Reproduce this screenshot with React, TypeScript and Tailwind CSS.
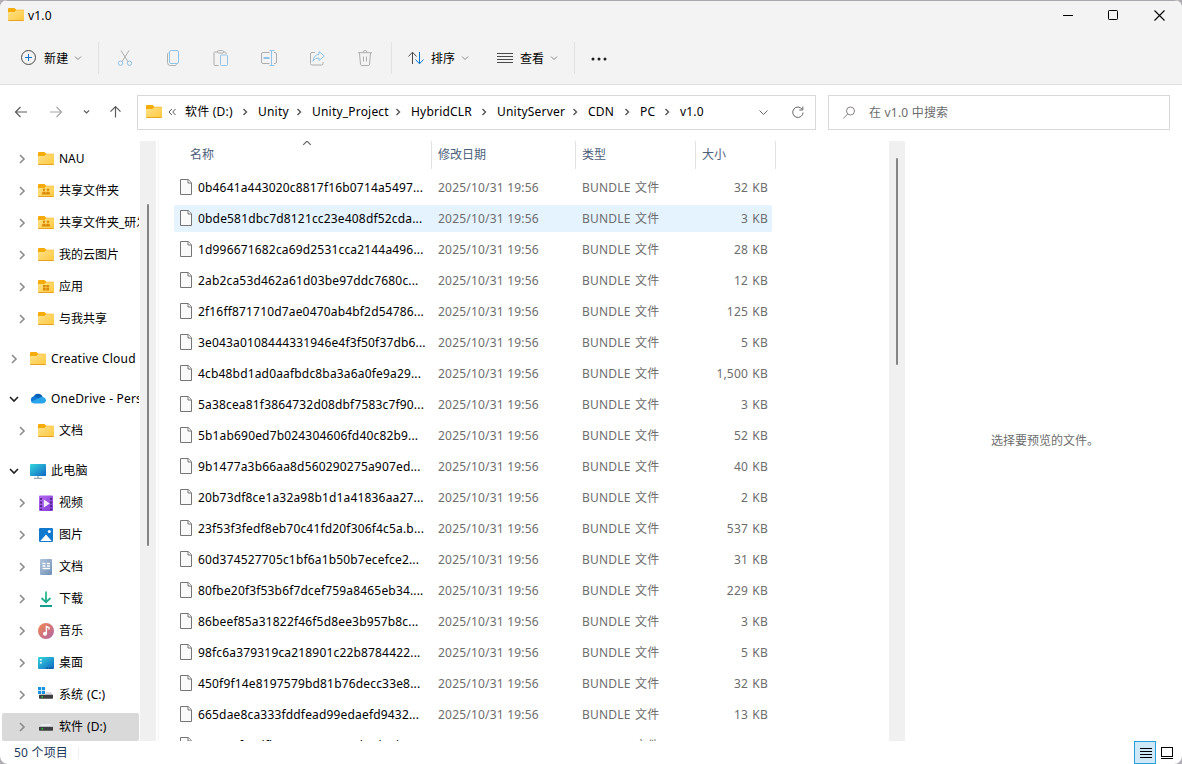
import React from 'react';
import clsx from 'clsx';

type IconName =
  | 'folder'
  | 'shared'
  | 'apps'
  | 'cloud'
  | 'pc'
  | 'video'
  | 'picture'
  | 'document'
  | 'download'
  | 'music'
  | 'desktop'
  | 'system'
  | 'drive';

interface TreeItem {
  label: string;
  icon: IconName;
  root?: boolean;
  open?: boolean;
  selected?: boolean;
}

const treeGroups: TreeItem[][] = [
  [
    { label: 'NAU', icon: 'folder' },
    { label: '共享文件夹', icon: 'shared' },
    { label: '共享文件夹_研发', icon: 'shared' },
    { label: '我的云图片', icon: 'folder' },
    { label: '应用', icon: 'apps' },
    { label: '与我共享', icon: 'folder' },
  ],
  [{ label: 'Creative Cloud Files', icon: 'folder', root: true }],
  [
    { label: 'OneDrive - Personal', icon: 'cloud', root: true, open: true },
    { label: '文档', icon: 'folder' },
  ],
  [
    { label: '此电脑', icon: 'pc', root: true, open: true },
    { label: '视频', icon: 'video' },
    { label: '图片', icon: 'picture' },
    { label: '文档', icon: 'document' },
    { label: '下载', icon: 'download' },
    { label: '音乐', icon: 'music' },
    { label: '桌面', icon: 'desktop' },
    { label: '系统 (C:)', icon: 'system' },
    { label: '软件 (D:)', icon: 'drive', selected: true },
  ],
];

const files = [
  { name: '0b4641a443020c8817f16b0714a5497...', size: '32 KB' },
  { name: '0bde581dbc7d8121cc23e408df52cda...', size: '3 KB', hover: true },
  { name: '1d996671682ca69d2531cca2144a496...', size: '28 KB' },
  { name: '2ab2ca53d462a61d03be97ddc7680c...', size: '12 KB' },
  { name: '2f16ff871710d7ae0470ab4bf2d54786...', size: '125 KB' },
  { name: '3e043a0108444331946e4f3f50f37db6...', size: '5 KB' },
  { name: '4cb48bd1ad0aafbdc8ba3a6a0fe9a29...', size: '1,500 KB' },
  { name: '5a38cea81f3864732d08dbf7583c7f90...', size: '3 KB' },
  { name: '5b1ab690ed7b024304606fd40c82b9...', size: '52 KB' },
  { name: '9b1477a3b66aa8d560290275a907ed...', size: '40 KB' },
  { name: '20b73df8ce1a32a98b1d1a41836aa27...', size: '2 KB' },
  { name: '23f53f3fedf8eb70c41fd20f306f4c5a.b...', size: '537 KB' },
  { name: '60d374527705c1bf6a1b50b7ecefce2...', size: '31 KB' },
  { name: '80fbe20f3f53b6f7dcef759a8465eb34....', size: '229 KB' },
  { name: '86beef85a31822f46f5d8ee3b957b8c...', size: '3 KB' },
  { name: '98fc6a379319ca218901c22b8784422...', size: '5 KB' },
  { name: '450f9f14e8197579bd81b76decc33e8...', size: '32 KB' },
  { name: '665dae8ca333fddfead99edaefd9432...', size: '13 KB' },
  { name: '8a5e2cf94dfb30716e2a95c4b7d30b2e...', size: '9 KB' },
];

const crumbs = [
  { label: '软件 (D:)', width: 'w-[73px]' },
  { label: 'Unity', width: 'w-[54px]' },
  { label: 'Unity_Project', width: 'w-[99px]' },
  { label: 'HybridCLR', width: 'w-[86px]' },
  { label: 'UnityServer', width: 'w-[91px]' },
  { label: 'CDN', width: 'w-[52px]' },
  { label: 'PC', width: 'w-[40px]' },
  { label: 'v1.0', width: 'w-[40px]' },
];

const Gradients: React.FC = () => (
  <svg className="absolute h-0 w-0">
    <defs>
      <linearGradient id="folder" x1="0" y1="0" x2="1" y2="1">
        <stop offset="0" stopColor="#ffe28a" />
        <stop offset="1" stopColor="#ffc83d" />
      </linearGradient>
      <linearGradient id="screen" x1="0" y1="0" x2="1" y2="1">
        <stop offset="0" stopColor="#35d6dc" />
        <stop offset="1" stopColor="#0f68c4" />
      </linearGradient>
      <linearGradient id="violet" x1="0" y1="0" x2="1" y2="1">
        <stop offset="0" stopColor="#b16af0" />
        <stop offset="1" stopColor="#8438d8" />
      </linearGradient>
      <linearGradient id="paper" x1="0" y1="0" x2="1" y2="1">
        <stop offset="0" stopColor="#b3c6dc" />
        <stop offset="1" stopColor="#6f8fb5" />
      </linearGradient>
      <linearGradient id="disc" x1="0" y1="0" x2="1" y2="1">
        <stop offset="0" stopColor="#f2894f" />
        <stop offset="1" stopColor="#b064a8" />
      </linearGradient>
      <linearGradient id="arrow" gradientUnits="userSpaceOnUse" x1="0" y1="0" x2="0" y2="16">
        <stop offset="0" stopColor="#2fc48d" />
        <stop offset="1" stopColor="#129c8c" />
      </linearGradient>
    </defs>
  </svg>
);

const FolderShape: React.FC = () => (
  <>
    <path d="M0 2a1 1 0 0 1 1-1h5.500l1.800 1.800H15a1 1 0 0 1 1 1V7H0z" fill="#f5ac0b" />
    <path d="M0 6a1 1 0 0 1 1-1h5.400L8.200 3.200H15a1 1 0 0 1 1 1V13a1 1 0 0 1-1 1H1a1 1 0 0 1-1-1z" fill="url(#folder)" />
    <path d="M.3 13.500h15.400" stroke="#e9a320" />
  </>
);

const drawings: Record<IconName, React.ReactNode> = {
  folder: <FolderShape />,
  shared: (
    <>
      <FolderShape />
      <g fill="#d98b06">
        <circle cx="6" cy="6.700" r="1.200" />
        <circle cx="10" cy="6.700" r="1.200" />
        <path d="M3.800 11.500c0-4 4-4 4.100-.9.2-3.100 4.300-3.100 4.300.9z" />
      </g>
    </>
  ),
  apps: (
    <>
      <FolderShape />
      <path d="M5 6h2.700v2.500H5zM8.300 6H11v2.500H8.300zM5 9h2.700v2.600H5zM8.300 9H11v2.600H8.300z" fill="#d98b06" />
    </>
  ),
  cloud: (
    <>
      <path d="M3.500 6.500a4.800 4.800 0 0 1 9.100-.9L10 9z" fill="#0a5fb9" />
      <path d="M3.700 12.200a3.500 3.500 0 0 1-.3-6.800c1.500-.4 2.700.1 4 .9L13 12.200z" fill="#0f78d4" />
      <path d="M1 10.800 10.600 6.300c2-.9 5.400.2 5.400 3 0 1.700-1.200 2.900-2.800 2.900H3.700c-1 0-2-.3-2.700-1.400z" fill="#29a5ec" />
    </>
  ),
  pc: (
    <>
      <rect x="0" y="1" width="16" height="12" rx=".8" fill="url(#screen)" />
      <path d="M8 13v2M4 15.300h8" stroke="#9aa7b2" strokeWidth="1.300" />
    </>
  ),
  video: (
    <>
      <rect x="1" y=".5" width="14" height="15.500" rx="1" fill="url(#violet)" />
      <path d="M3 3v12M13 3v12" stroke="#3a1a6b" strokeWidth="1.600" strokeDasharray="1.800 1.800" />
      <path d="M5.800 4.500v8l6-4z" fill="#f3eafd" />
    </>
  ),
  picture: (
    <>
      <rect x="1" y="1" width="14" height="14" rx="1.300" fill="#1179ce" />
      <path d="M2.300 14 8 7.500l5.700 6.500z" fill="#fff" />
      <circle cx="11.300" cy="4.600" r="1.500" fill="#fff" />
    </>
  ),
  document: (
    <>
      <rect x="2" y="0" width="12" height="16" rx="1" fill="url(#paper)" />
      <path d="M4.500 4.500h3M4.500 7h3M8.800 4.500H12M8.800 7H12M4.500 9.500H12" stroke="#fff" strokeWidth="1.300" />
    </>
  ),
  download: <path d="M8 .5V11M3.500 7 8 11.200 12.500 7M2 15h12" fill="none" stroke="url(#arrow)" strokeWidth="1.800" />,
  music: (
    <>
      <circle cx="8" cy="8" r="8" fill="url(#disc)" />
      <path d="M8.400 10.500V3.500l2.600 1.200v1.800" fill="none" stroke="#fff" strokeWidth="1.400" />
      <circle cx="7" cy="10.800" r="2" fill="#fff" />
    </>
  ),
  desktop: (
    <>
      <rect x="0" y="2" width="16" height="12" rx="1" fill="url(#screen)" />
      <path d="M2 4.800h1.700M2 7.800h1.700" stroke="#fff" strokeWidth="1.600" />
      <path d="M8.500 13h6" stroke="#0b3d75" strokeDasharray="1.500 1" />
    </>
  ),
  system: (
    <>
      <path d="M0 0h3.200v3.200H0zM3.900 0h3.200v3.200H3.900zM0 3.900h3.200v3.200H0zM3.900 3.900h3.200v3.200H3.900z" fill="#1a94e0" />
      <path d="M8 5h5l2 3H1l.6-.6H8z" fill="#dcdce0" />
      <rect x="1" y="7.700" width="14" height="4" rx=".7" fill="#3c3f41" />
      <rect x="3.500" y="9.200" width="1.500" height="1.300" fill="#3be03b" />
    </>
  ),
  drive: (
    <>
      <path d="M3.500 5h9L15 8H1z" fill="#ebebee" />
      <rect x="1" y="7.700" width="14" height="4" rx=".7" fill="#3c3f41" />
      <rect x="3.500" y="9.200" width="1.500" height="1.300" fill="#3be03b" />
    </>
  ),
};

const Icon: React.FC<{ name: IconName }> = ({ name }) => (
  <svg viewBox="0 0 16 16" className="h-4 w-4 shrink-0">
    {drawings[name]}
  </svg>
);

const Chevron: React.FC<{ className: string }> = ({ className }) => (
  <svg viewBox="0 0 8 8" fill="none" stroke="currentColor" className={clsx('h-2 w-2 shrink-0', className)}>
    <path d="m1 2.500 3 3 3-3" />
  </svg>
);

const TitleBar: React.FC = () => (
  <div className="flex h-[31px] items-center border-t border-[#aaa8ac] pb-0.5 pl-2">
    <Icon name="folder" />
    <span className="ml-1 grow pt-0.5">v1.0</span>
    <svg viewBox="0 0 120 14" fill="none" stroke="#000" className="mr-4 h-3.5 w-[120px]">
      <path d="M17 7.500h10" />
      <rect x="62.500" y="2.500" width="9" height="9" rx=".8" />
      <path d="m108.500 2.500 10 10m0-10-10 10" strokeWidth="1.100" />
    </svg>
  </div>
);

const actions: React.ReactNode[] = [
  <>
    <path d="M4 .5 11.200 12M12 .5 4.800 12" stroke="#adadad" />
    <circle cx="3.500" cy="13.200" r="2.200" />
    <circle cx="12.500" cy="13.200" r="2.200" />
  </>,
  <>
    <path d="M3.500 2.800C2.500 3.100 2.500 3.800 2.500 5v7.500a3 3 0 0 0 3 3H10c.8 0 1.500-.5 1.800-1.200" stroke="#adadad" />
    <rect x="4.500" y=".5" width="9" height="13" rx="1.500" />
  </>,
  <>
    <path d="M4.500 2H2a1 1 0 0 0-1 1v11.500a1 1 0 0 0 1 1h3.500M10.500 2H12a1 1 0 0 1 1 1v1" stroke="#adadad" />
    <rect x="4.500" y=".6" width="6" height="2.500" rx="1.100" stroke="#adadad" />
    <rect x="7.500" y="5" width="7" height="10.500" rx="1" />
  </>,
  <>
    <path d="M8.500 2.500H2A1.500 1.500 0 0 0 .5 4v8A1.500 1.500 0 0 0 2 13.500h6.500M13 2.500h1.200A1.500 1.500 0 0 1 15.500 4v8a1.500 1.500 0 0 1-1.300 1.500H13" stroke="#adadad" />
    <path d="M8.500.5h5M8.500 15.500h5M10.500 .5v15" />
    <path d="M2.500 8h6" strokeWidth="2" />
  </>,
  <>
    <path d="M6 2.500H3A1.500 1.500 0 0 0 1.500 4v9.500A1.500 1.500 0 0 0 3 15h9.500a1.500 1.500 0 0 0 1.500-1.500V12" stroke="#adadad" />
    <path d="M10 1.500 15.300 6 10 10.500V8c-3 0-4.500.8-6 3.300.3-4.300 2.500-6.600 6-7z" />
  </>,
  <>
    <path d="M1 2.700h14M6 2.500a2 2 0 0 1 4 0M2.500 3l1 11.300c0 .7.500 1.200 1.200 1.200h6.600c.7 0 1.200-.5 1.200-1.200l1-11.300M6.500 6.500v5M9.500 6.500v5" stroke="#adadad" />
  </>,
];

const Divider: React.FC = () => <div className="h-8 w-px shrink-0 bg-[#e2e2e2]" />;

const Toolbar: React.FC = () => (
  <div className="flex h-[54px] items-center border-b border-[#dedede] pt-px">
    <div className="flex w-[98px] items-center pl-5">
      <svg viewBox="0 0 16 16" fill="none" className="mr-2 h-4 w-4">
        <circle cx="8.500" cy="7.500" r="7" stroke="#4a4a4a" />
        <path d="M8.500 4v7M5 7.500h7" stroke="#0a74cc" />
      </svg>
      <span className="pt-0.5">新建</span>
      <Chevron className="ml-1.5 text-[#8a8a8a]" />
    </div>
    <Divider />
    <div className="ml-0.5 flex">
      {actions.map((drawing, i) => (
        <div key={i} className="flex w-12 justify-center">
          <svg viewBox="0 0 16 16" fill="none" stroke="#91c3e9" className="h-4 w-4">
            {drawing}
          </svg>
        </div>
      ))}
    </div>
    <div className="ml-0.5 flex">
      <Divider />
    </div>
    <div className="ml-4 flex items-center tracking-normal">
      <svg viewBox="0 0 16 16" fill="none" className="mr-[7px] h-4 w-4">
        <path d="M4.500 14V2.500M.5 6.500l4-4.300 4 4.300" stroke="#4a4a4a" />
        <path d="M11.500 2v11.500M7.500 9.500l4 4.300 4-4.300" stroke="#0a74cc" />
      </svg>
      <span className="pt-0.5">排序</span>
      <Chevron className="ml-1.5 text-[#8a8a8a]" />
    </div>
    <div className="ml-7 flex items-center tracking-normal">
      <svg viewBox="0 0 16 16" stroke="#4a4a4a" className="mr-[7px] h-4 w-4">
        <path d="M0 3.500h16M0 6.500h16M0 9.500h16M0 12.500h16" />
      </svg>
      <span className="pt-0.5">查看</span>
      <Chevron className="ml-1.5 text-[#8a8a8a]" />
    </div>
    <div className="ml-4 flex">
      <Divider />
    </div>
    <svg viewBox="0 0 16 4" className="mt-px ml-4 h-1 w-4" fill="#1f1f1f">
      <circle cx="2" cy="2" r="1.500" />
      <circle cx="8" cy="2" r="1.500" />
      <circle cx="14" cy="2" r="1.500" />
    </svg>
  </div>
);

const AddressBar: React.FC = () => (
  <div className="mb-px flex h-[55px] shrink-0 items-center bg-white pr-3">
    <div className="flex w-[137px] items-center pb-px">
      <svg viewBox="0 0 137 16" fill="none" stroke="#5c5c5c" strokeWidth="1.200" className="h-4 w-[137px]">
        <path d="M15.500 8H27M20.500 3l-5 5 5 5" />
        <path d="M50 8h11.500M56.500 3l5 5-5 5" stroke="#a8a8a8" />
        <path d="m84 6.500 2.500 2.500L89 6.500" />
        <path d="M115.500 13.500v-11M110.500 7.700l5-5 5 5" />
      </svg>
    </div>
    <div className="flex h-[35px] w-[679px] items-center border border-[#d9d9d9] pb-px pl-2">
      <Icon name="folder" />
      <svg viewBox="0 0 8 8" fill="none" stroke="#555" className="mr-2 ml-1.5 h-2 w-2">
        <path d="M3.800 1 1 4l2.800 3M7.500 1 4.700 4l2.800 3" />
      </svg>
      <div className="ml-px flex grow">
        {crumbs.map((crumb, i) => (
          <div key={crumb.label} className={clsx('flex items-center justify-between whitespace-nowrap', crumb.width)}>
            {crumb.label}
            {i < crumbs.length - 1 && <Chevron className="mr-[9px] -rotate-90 stroke-[1.400] text-[#555]" />}
          </div>
        ))}
      </div>
      <svg viewBox="0 0 50 16" fill="none" stroke="#666" className="mr-2 h-4 w-[50px]">
        <path d="m2.500 6.500 4 4 4-4" />
        <path d="M45.300 5.500a5.200 5.200 0 1 0 .8 3M45.800 2.500v3.500h-3.500" />
      </svg>
    </div>
    <div className="ml-3 flex h-[35px] grow items-center border border-[#d9d9d9] pl-3.5 text-[#6b6b6b]">
      <svg viewBox="0 0 14 14" fill="none" stroke="#8a8388" className="mr-3 h-3.5 w-3.5">
        <circle cx="7.500" cy="5" r="4" />
        <path d="M4.600 8 .3 12.500" />
      </svg>
      <span>在 v1.0 中搜索</span>
    </div>
  </div>
);

const TreeRow: React.FC<{ item: TreeItem }> = ({ item }) => (
  <div className="flex h-8 items-end pl-0.5">
    <div
      className={clsx(
        'flex h-7 w-[137px] items-center overflow-hidden rounded-xs whitespace-nowrap',
        item.root ? 'pl-[7px] tracking-[0.2px]' : 'pl-[15px] tracking-normal [word-spacing:1px]',
        item.selected && 'bg-[#d9d9d9]',
      )}
    >
      <svg
        viewBox="0 0 10 10"
        fill="none"
        strokeWidth="1.600"
        className={clsx('mr-[11px] h-2.5 w-2.5 shrink-0', item.open ? 'stroke-[#222]' : '-rotate-90 stroke-[#8c8c8c]')}
      >
        <path d="m1 3 4 4 4-4" />
      </svg>
      <Icon name={item.icon} />
      <span className="ml-[5px]">{item.label}</span>
    </div>
  </div>
);

const Sidebar: React.FC = () => (
  <div className="flex w-[158px] shrink-0">
    <div className="flex w-[140px] flex-col gap-2 overflow-hidden">
      {treeGroups.map((group, i) => (
        <div key={i}>
          {group.map((item) => (
            <TreeRow key={item.label} item={item} />
          ))}
        </div>
      ))}
    </div>
    <div className="w-4 bg-[#f0f0f0] pt-[63px] pl-[7px]">
      <div className="h-[342px] w-0.5 rounded bg-[#858585]" />
    </div>
  </div>
);

const FileIcon: React.FC = () => (
  <svg viewBox="0 0 12 16" fill="#fafafa" stroke="#757575" className="mb-px h-4 w-3 shrink-0">
    <path d="M.5.5h7.800l3.200 3.200v11.800H.5z" />
    <path d="M8 .5V4h3.500" />
  </svg>
);

const FileList: React.FC = () => (
  <div className="flex grow flex-col overflow-hidden border-l border-[#f5f5f5] pl-[15px]">
    <div className="flex h-7 shrink-0 tracking-normal text-[#4c607a]">
      <div className="relative flex w-[258px] items-center border-r border-[#e2e2e2] pl-4">
        名称
        <Chevron className="absolute -top-0.5 left-[129px] rotate-180 scale-125 text-[#666]" />
      </div>
      <div className="flex w-36 items-center border-r border-[#e2e2e2] pl-1.5">修改日期</div>
      <div className="flex w-[120px] items-center border-r border-[#e2e2e2] pl-1.5">类型</div>
      <div className="flex w-20 items-center border-r border-[#e2e2e2] pl-1.5">大小</div>
    </div>
    <div className="mt-[5px] flex flex-col gap-1">
      {files.map((file) => (
        <div
          key={file.name}
          className={clsx(
            'flex h-[27px] w-[598px] shrink-0 items-center rounded-xs pl-1.5 whitespace-nowrap text-[#6d6d6d]',
            file.hover && 'bg-[#e5f3ff]',
          )}
        >
          <FileIcon />
          <span className="ml-1.5 w-60 tracking-[0.17px] text-black">{file.name}</span>
          <span className="w-36">2025/10/31 19:56</span>
          <span className="w-24 [word-spacing:1px]">BUNDLE 文件</span>
          <span className="grow pr-1 text-right [word-spacing:1px]">{file.size}</span>
        </div>
      ))}
    </div>
  </div>
);

const StatusBar: React.FC = () => (
  <div className="flex h-[23px] shrink-0 items-center justify-between pl-3.5 text-[#1e395b]">
    <div className="flex items-center">
      <span className="w-16">50 个项目</span>
      <div className="h-3 w-px bg-[#f0f0f0]" />
    </div>
    <div className="mr-[7px] flex h-full items-center">
      <div className="flex h-full w-[22px] items-center justify-center border border-[#26a0da] bg-[#cfe8f7]">
        <svg viewBox="0 0 12 11" stroke="#000" className="mt-px ml-0.5 h-[11px] w-3">
          <path d="M0 .5h12M0 3.500h12M0 6.500h12M0 9.500h12" />
        </svg>
      </div>
      <svg viewBox="0 0 14 14" fill="none" stroke="#000" className="mr-px ml-1 h-3.5 w-3.5">
        <rect x="1.500" y="1.500" width="11" height="9" />
        <path d="M1 12.500h12" />
      </svg>
    </div>
  </div>
);

export default function App() {
  return (
    <div className="h-[764px] w-[1182px] bg-[#b0aeb4] font-['Noto_Sans','Noto_Sans_CJK_SC',sans-serif] text-xs tracking-[0.2px] text-black">
      <Gradients />
      <div className="flex h-full flex-col overflow-hidden rounded-lg bg-white">
        <div className="shrink-0 bg-[#f3f3f3]">
          <TitleBar />
          <Toolbar />
        </div>
        <AddressBar />
        <div className="flex min-h-0 grow">
          <Sidebar />
          <FileList />
          <div className="w-4 shrink-0 bg-[#f0f0f0] pt-[17px] pl-[7px]">
            <div className="h-[207px] w-0.5 rounded bg-[#858585]" />
          </div>
          <div className="flex w-[277px] shrink-0 items-center justify-center pl-[3px] tracking-normal text-[#6d6d6d]">
            选择要预览的文件。
          </div>
        </div>
        <StatusBar />
      </div>
    </div>
  );
}
